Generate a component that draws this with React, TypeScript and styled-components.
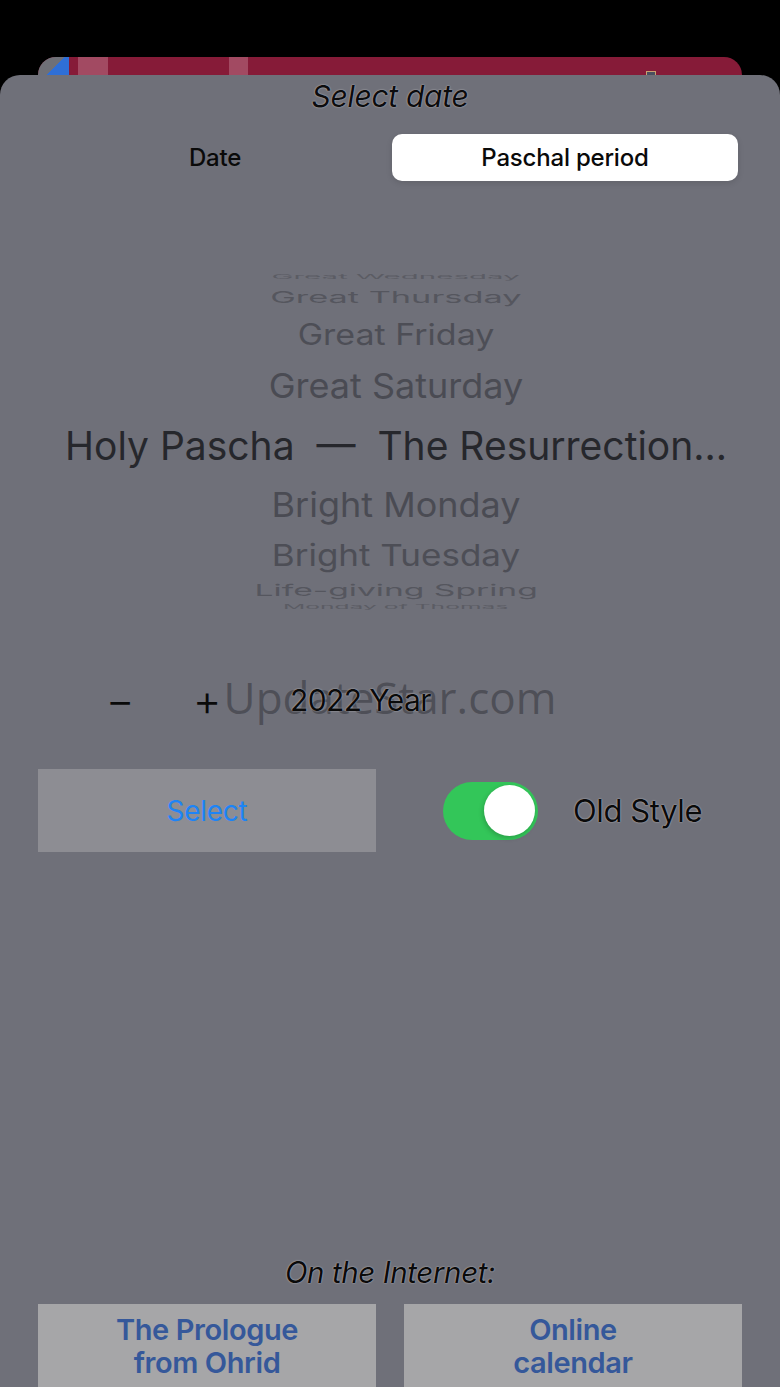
import styled, { createGlobalStyle } from "styled-components";

const GlobalStyle = createGlobalStyle`
  html, body {
    margin: 0;
    padding: 0;
    background: #000;
  }
  body {
    font-family: Inter, "Noto Sans", sans-serif;
  }
`;

type WheelRow = {
  label: string;
  size: number;
  height: number;
  squash: number;
  stretch: number;
  color: string;
};

const rows: WheelRow[] = [
  { label: "Great Wednesday", size: 22, height: 22, squash: 0.28, stretch: 1.34, color: "#5b5c64" },
  { label: "Great Thursday", size: 24, height: 20, squash: 0.66, stretch: 1.43, color: "#55565e" },
  { label: "Great Friday", size: 34, height: 54, squash: 0.86, stretch: 1, color: "#4d4e56" },
  { label: "Great Saturday", size: 36, height: 48, squash: 0.96, stretch: 1, color: "#4a4b53" },
  { label: "Holy Pascha  —  The Resurrection...", size: 39, height: 70, squash: 1, stretch: 1, color: "#26272c" },
  { label: "Bright Monday", size: 36, height: 50, squash: 0.96, stretch: 1, color: "#4a4b53" },
  { label: "Bright Tuesday", size: 35, height: 50, squash: 0.86, stretch: 1, color: "#4d4e56" },
  { label: "Life-giving Spring", size: 24, height: 22, squash: 0.66, stretch: 1.4, color: "#55565e" },
  { label: "Monday of Thomas", size: 22, height: 10, squash: 0.25, stretch: 1.12, color: "#5b5c64" },
];

export default function App() {
  return (
    <>
      <GlobalStyle />
      <Screen>
        <BackCard>
          <CardCorner />
          <CardPatch $left={40} $width={30} />
          <CardPatch $left={191} $width={19} />
          <CardPin />
        </BackCard>
        <Sheet>
          <Title>Select date</Title>
          <Segmented>
            <Segment>Date</Segment>
            <Segment $active>Paschal period</Segment>
          </Segmented>

          <Wheel>
            {rows.map((r) => (
              <WheelItem key={r.label} $height={r.height}>
                <WheelText
                  $size={r.size}
                  $squash={r.squash}
                  $stretch={r.stretch}
                  $color={r.color}
                >
                  {r.label}
                </WheelText>
              </WheelItem>
            ))}
          </Wheel>

          <YearRow>
            <StepButton>−</StepButton>
            <StepButton>+</StepButton>
            <YearLabel>2022 Year</YearLabel>
            <Watermark>UpdateStar.com</Watermark>
          </YearRow>

          <ActionRow>
            <SelectButton>Select</SelectButton>
            <ToggleWrap>
              <Toggle>
                <Knob />
              </Toggle>
              <ToggleLabel>Old Style</ToggleLabel>
            </ToggleWrap>
          </ActionRow>

          <Spacer />

          <InternetTitle>On the Internet:</InternetTitle>
          <LinkGrid>
            <LinkButton>
              The Prologue
              <br />
              from Ohrid
            </LinkButton>
            <LinkButton>
              Online
              <br />
              calendar
            </LinkButton>
          </LinkGrid>
        </Sheet>
      </Screen>
    </>
  );
}

const halo = "0 0 1.5px rgba(255, 255, 255, 0.75)";

const Screen = styled.div`
  width: 780px;
  height: 1387px;
  overflow: hidden;
  background: #000;
  display: flex;
  flex-direction: column;
`;

const BackCard = styled.div`
  position: relative;
  margin: 57px 38px 0;
  height: 18px;
  flex-shrink: 0;
  border-radius: 18px 18px 0 0;
  background: #861b38;
  overflow: hidden;
`;

const CardCorner = styled.div`
  position: absolute;
  left: 0;
  top: 0;
  width: 31px;
  height: 100%;
  background: linear-gradient(135deg, #6f7077 0 55%, #2f6fd6 55% 100%);
`;

const CardPatch = styled.div<{ $left: number; $width: number }>`
  position: absolute;
  top: 0;
  left: ${(p) => p.$left}px;
  width: ${(p) => p.$width}px;
  height: 100%;
  background: #a24a62;
`;

const CardPin = styled.div`
  position: absolute;
  right: 86px;
  top: 14px;
  width: 8px;
  height: 6px;
  border: 1px solid #c9a070;
  background: #4a5060;
`;

const Sheet = styled.div`
  flex: 1;
  display: flex;
  flex-direction: column;
  background: #6f7079;
  border-radius: 20px 20px 0 0;
`;

const Title = styled.div`
  height: 42px;
  line-height: 42px;
  text-align: center;
  font-size: 30px;
  font-style: italic;
  color: #0c0c0e;
  letter-spacing: -0.3px;
  text-shadow: ${halo};
`;

const Segmented = styled.div`
  margin: 13px 38px 0;
  padding: 4px;
  display: grid;
  grid-template-columns: 1fr 1fr;
  gap: 4px;
  height: 47px;
`;

const Segment = styled.div<{ $active?: boolean }>`
  display: flex;
  align-items: center;
  justify-content: center;
  border-radius: 10px;
  font-size: 24px;
  font-weight: 500;
  letter-spacing: -0.2px;
  color: #0a0a0a;
  background: ${(p) => (p.$active ? "#fff" : "transparent")};
  box-shadow: ${(p) => (p.$active ? "0 2px 6px rgba(0,0,0,0.12)" : "none")};
`;

const Wheel = styled.div`
  margin-top: 81px;
  display: flex;
  flex-direction: column;
`;

const WheelItem = styled.div<{ $height: number }>`
  height: ${(p) => p.$height}px;
  display: flex;
  align-items: center;
  justify-content: center;
  overflow: visible;
  padding: 0 54px 0 66px;
`;

const WheelText = styled.div<{
  $size: number;
  $squash: number;
  $stretch: number;
  $color: string;
}>`
  font-size: ${(p) => p.$size}px;
  color: ${(p) => p.$color};
  transform: scale(${(p) => p.$stretch}, ${(p) => p.$squash});
  white-space: pre;
  line-height: 1;
`;

const YearRow = styled.div`
  position: relative;
  margin-top: 62px;
  height: 52px;
  display: flex;
  align-items: center;
  padding-left: 95px;
`;

const StepButton = styled.div`
  width: 50px;
  text-align: center;
  font-size: 44px;
  font-weight: 300;
  color: #0a0a0a;
  margin-right: 37px;
  line-height: 1;
`;

const YearLabel = styled.div`
  margin-left: 21px;
  font-size: 30px;
  color: #0a0a0a;
  letter-spacing: -0.6px;
  text-shadow: ${halo};
  position: relative;
  z-index: 1;
`;

const Watermark = styled.div`
  position: absolute;
  left: 0;
  right: 0;
  top: 50%;
  transform: translateY(-55%);
  text-align: center;
  font-family: "Open Sans", sans-serif;
  font-size: 44px;
  color: rgba(50, 51, 58, 0.55);
  pointer-events: none;
`;

const ActionRow = styled.div`
  margin: 43px 38px 0;
  display: grid;
  grid-template-columns: 338px 1fr;
  align-items: center;
`;

const SelectButton = styled.div`
  height: 83px;
  display: flex;
  align-items: center;
  justify-content: center;
  background: #8d8d93;
  color: #1d84f6;
  font-size: 28px;
  letter-spacing: -0.3px;
`;

const ToggleWrap = styled.div`
  display: flex;
  align-items: center;
  padding-left: 67px;
  gap: 35px;
`;

const Toggle = styled.div`
  width: 95px;
  height: 58px;
  border-radius: 29px;
  background: #33c659;
  display: flex;
  align-items: center;
  justify-content: flex-end;
  padding-right: 3px;
  box-sizing: border-box;
`;

const Knob = styled.div`
  width: 51px;
  height: 51px;
  border-radius: 50%;
  background: #fff;
  box-shadow: -1px 2px 5px rgba(0, 0, 0, 0.2);
`;

const ToggleLabel = styled.div`
  font-size: 31px;
  color: #0a0a0a;
  letter-spacing: -0.4px;
  text-shadow: ${halo};
`;

const Spacer = styled.div`
  flex: 1;
`;

const InternetTitle = styled.div`
  text-align: center;
  font-size: 29.5px;
  font-style: italic;
  color: #0a0a0a;
  letter-spacing: -0.4px;
  text-shadow: ${halo};
  height: 36px;
  line-height: 36px;
`;

const LinkGrid = styled.div`
  margin: 14px 38px 0;
  display: grid;
  grid-template-columns: 338px 338px;
  gap: 28px;
  height: 83px;
`;

const LinkButton = styled.div`
  background: #a6a6a8;
  color: #35589a;
  font-size: 29px;
  font-weight: 600;
  letter-spacing: -0.4px;
  line-height: 33px;
  text-align: center;
  padding-top: 9px;
  height: 120px;
`;
